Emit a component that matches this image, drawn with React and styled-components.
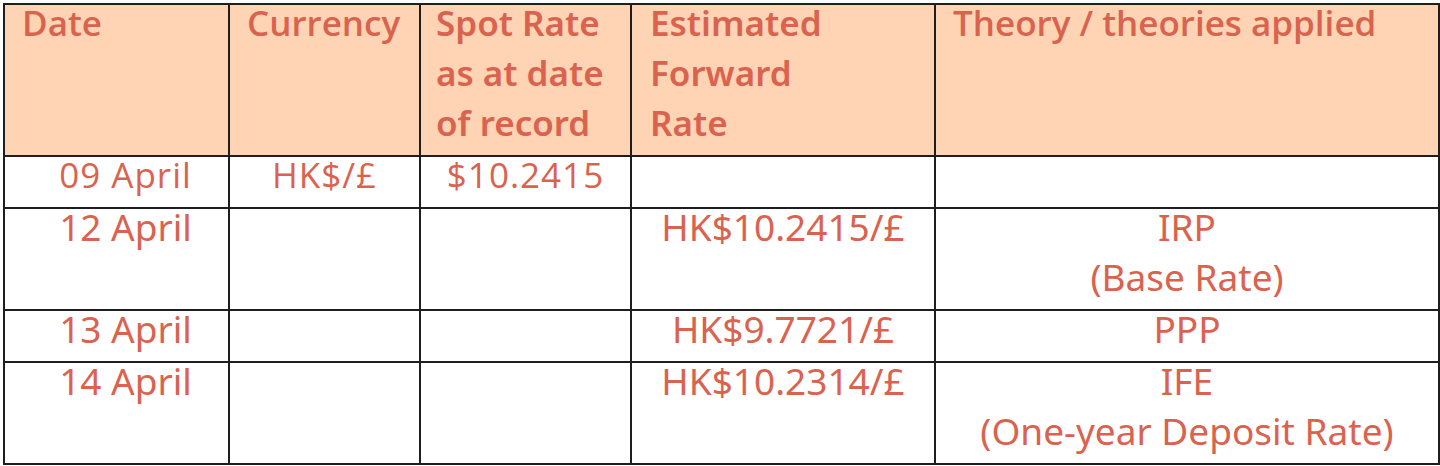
import React from 'react';
import styled, { createGlobalStyle } from 'styled-components';

const GlobalStyle = createGlobalStyle`
  html, body {
    margin: 0;
    padding: 0;
    background: #ffffff;
  }
`;

const Page = styled.div`
  padding: 3px 0 0 3px;
  width: 1440px;
  height: 466px;
  box-sizing: border-box;
`;

const Table = styled.table`
  border-collapse: collapse;
  table-layout: fixed;
  width: 1435px;
  color: #d9634f;
`;

const HeadCell = styled.th`
  background: #ffd4b4;
  border: 2px solid #1e1e1e;
  padding: 0 0 0 ${(p) => p.$pad || 17}px;
  vertical-align: top;
  text-align: left;
  font-family: ${(p) => (p.$alt ? '"Noto Sans", sans-serif' : '"Open Sans", sans-serif')};
  font-weight: 600;
  font-size: 35px;
  line-height: 50px;
  white-space: nowrap;
`;

const Cell = styled.td`
  border: 2px solid #1e1e1e;
  padding: 0 0 0 ${(p) => p.$shift || 0}px;
  vertical-align: top;
  text-align: center;
  font-family: ${(p) => (p.$alt ? '"Noto Sans", sans-serif' : '"Open Sans", sans-serif')};
  font-size: ${(p) => (p.$alt ? 37 : 35)}px;
  letter-spacing: ${(p) => (p.$alt ? '0' : '1px')};
  line-height: 50px;
  white-space: nowrap;
`;

const Text = styled.div`
  margin: -7px 0 7px;
  min-height: ${(p) => p.$lines * 50}px;
`;

const rows = [
  { date: '09 April', cur: 'HK$/£', spot: '$10.2415', fwd: '', theory: [], lines: 1, plain: true },
  { date: '12 April', cur: '', spot: '', fwd: 'HK$10.2415/£', theory: ['IRP', '(Base Rate)'], lines: 2 },
  { date: '13 April', cur: '', spot: '', fwd: 'HK$9.7721/£', theory: ['PPP'], lines: 1 },
  { date: '14 April', cur: '', spot: '', fwd: 'HK$10.2314/£', theory: ['IFE', '(One-year Deposit Rate)'], lines: 2 },
];

export default function App() {
  return (
    <Page>
      <GlobalStyle />
      <Table>
        <colgroup>
          <col style={{ width: 225 }} />
          <col style={{ width: 191 }} />
          <col style={{ width: 211 }} />
          <col style={{ width: 304 }} />
          <col style={{ width: 504 }} />
        </colgroup>
        <thead>
          <tr>
            <HeadCell><Text $lines={3}>Date</Text></HeadCell>
            <HeadCell><Text $lines={3}>Currency</Text></HeadCell>
            <HeadCell $alt $pad={15}>
              <Text $lines={3}>Spot Rate<br />as at date<br />of record</Text>
            </HeadCell>
            <HeadCell $alt $pad={18}>
              <Text $lines={3}>Estimated<br />Forward<br />Rate</Text>
            </HeadCell>
            <HeadCell><Text $lines={3}>Theory / theories applied</Text></HeadCell>
          </tr>
        </thead>
        <tbody>
          {rows.map((r) => (
            <tr key={r.date}>
              <Cell $alt={!r.plain} $shift={18}>
                <Text $lines={r.lines}>{r.date}</Text>
              </Cell>
              <Cell><Text $lines={r.lines}>{r.cur}</Text></Cell>
              <Cell><Text $lines={r.lines}>{r.spot}</Text></Cell>
              <Cell $alt><Text $lines={r.lines}>{r.fwd}</Text></Cell>
              <Cell $alt>
                <Text $lines={r.lines}>
                  {r.theory.map((t) => <div key={t}>{t}</div>)}
                </Text>
              </Cell>
            </tr>
          ))}
        </tbody>
      </Table>
    </Page>
  );
}
